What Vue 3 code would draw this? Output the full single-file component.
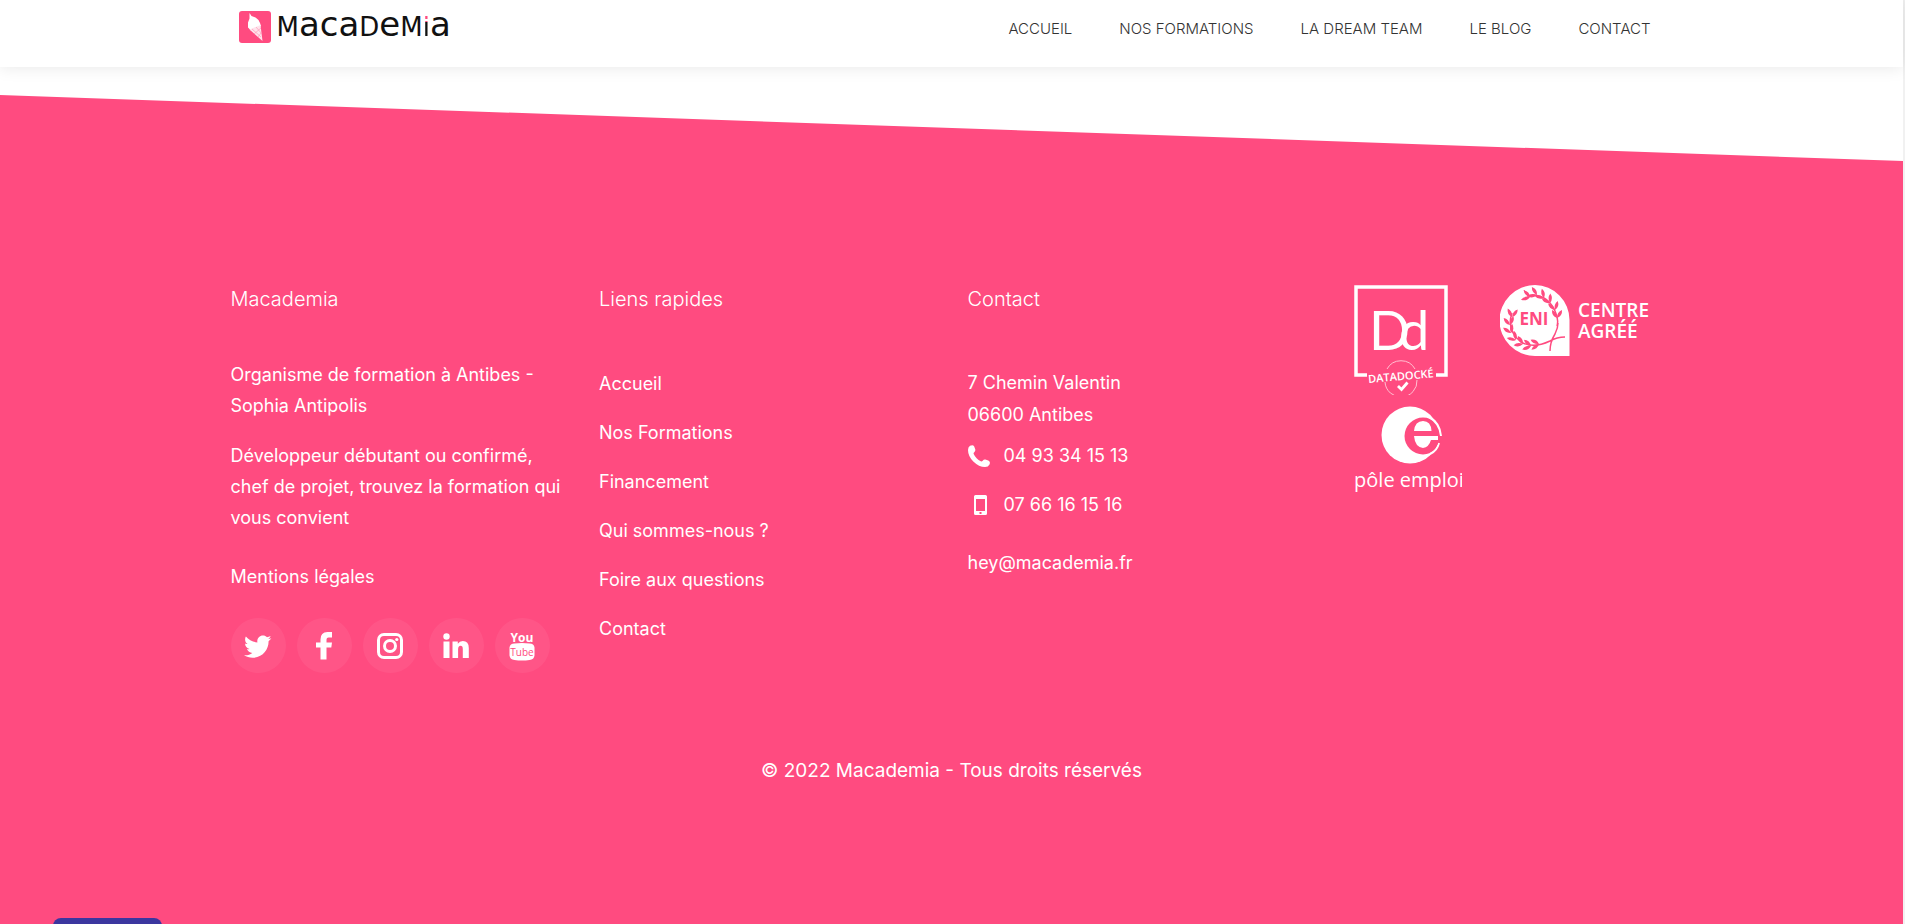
<script setup>
const nav = ['Accueil', 'Nos formations', 'La dream team', 'Le blog', 'Contact']
const links = ['Accueil', 'Nos Formations', 'Financement', 'Qui sommes-nous ?', 'Foire aux questions', 'Contact']

const wreath = [
  [30, 12, 195], [37, 10, 205], [44, 13, 225], [50, 18, 240], [55, 25, 255], [57, 33, 270],
  [12, 32, 275], [10, 40, 260], [11, 48, 245], [16, 55, 225], [23, 59, 205], [31, 61, 190], [39, 59, 175]
]
</script>

<template>
  <div class="page">
    <header class="topbar">
      <div class="container topbar-inner">
        <a href="#" class="brand">
          <svg class="brand-mark" viewBox="0 0 32 32" aria-hidden="true">
            <rect width="32" height="32" rx="3" fill="#ff4b80" />
            <path d="M10.500 2l2 3 4 1.500 3 2.500 1.500 3 1 3-5 3-5 1.500-3-3v-5l1.500-4z" fill="#fff" />
            <path d="M10.500 18.500l11-4.500 2 16z" fill="#ffe3ec" />
            <path d="M13 18l9 8M17 16l6 7M22 17l-7 6M22 22l-3 4" stroke="#ff8fb0" stroke-width=".6" />
          </svg>
          <span class="wordmark">M<b>aca</b>D<b>e</b>M<i>i</i><b>a</b></span>
        </a>
        <nav class="menu">
          <a v-for="item in nav" :key="item" href="#">{{ item }}</a>
        </nav>
      </div>
    </header>

    <footer class="footer">
      <div class="container columns">
        <section class="about">
          <h2>Macademia</h2>
          <p>Organisme de formation à Antibes - Sophia Antipolis</p>
          <p>Développeur débutant ou confirmé, chef de projet, trouvez la formation qui vous convient</p>
          <a href="#" class="legal">Mentions légales</a>
          <div class="social">
            <a href="#" aria-label="Twitter">
              <svg viewBox="0 0 28 28"><path transform="translate(0 1) scale(1.140)" d="M23.954 4.569c-.885.389-1.830.654-2.825.775 1.014-.611 1.794-1.574 2.163-2.723-.951.555-2.005.959-3.127 1.184-.896-.959-2.173-1.559-3.591-1.559-2.717 0-4.920 2.203-4.920 4.917 0 .390.045.765.127 1.124C7.691 8.094 4.066 6.130 1.640 3.161c-.427.722-.666 1.561-.666 2.475 0 1.710.870 3.213 2.188 4.096-.807-.026-1.566-.248-2.228-.616v.061c0 2.385 1.693 4.374 3.946 4.827-.413.111-.849.171-1.296.171-.314 0-.615-.030-.916-.086.631 1.953 2.445 3.377 4.604 3.417-1.680 1.319-3.809 2.105-6.102 2.105-.390 0-.779-.023-1.170-.067 2.189 1.394 4.768 2.209 7.557 2.209 9.054 0 13.999-7.496 13.999-13.986 0-.209 0-.420-.015-.630.961-.689 1.800-1.560 2.460-2.548z" /></svg>
            </a>
            <a href="#" aria-label="Facebook">
              <svg viewBox="0 0 28 28"><path d="M22 0V5.500h-3.500q-2 0-2 2v3H22l-.7 5h-4.800V27.500H10.500V15.500H6v-5h4.500V7.500q0-7.500 7-7.500z" /></svg>
            </a>
            <a href="#" aria-label="Instagram">
              <svg viewBox="0 0 28 28" class="outline"><rect x="2.500" y="2.500" width="23" height="23" rx="5.500" /><circle cx="14" cy="14" r="5.500" /><circle cx="20.800" cy="7.500" r="1.600" class="dot" /></svg>
            </a>
            <a href="#" aria-label="LinkedIn">
              <svg viewBox="0 0 28 28"><circle cx="4.500" cy="4.500" r="3.200" /><path d="M1.500 9.500h6V26h-6zM10.500 9.500h5.300v2.200q1.800-2.700 5-2.700 6 0 6 7v10h-6v-9q0-3.300-2.200-3.300-2.500 0-2.500 3.500V26h-5.600z" /></svg>
            </a>
            <a href="#" aria-label="YouTube">
              <svg viewBox="0 0 28 30"><path d="M6.500 12.500Q14 11.500 21.500 12.500q4.500 0 5 4v8q-.5 4-5 4.500-7.500 1-15 0Q2 28.500 1.500 24.500v-8q.5-4 5-4z" /><g class="yt"><text x="14" y="10.500" class="you">You</text><text x="14" y="24.500" class="tube">Tube</text></g></svg>
            </a>
          </div>
        </section>

        <section>
          <h2>Liens rapides</h2>
          <ul class="links">
            <li v-for="item in links" :key="item"><a href="#">{{ item }}</a></li>
          </ul>
        </section>

        <section>
          <h2>Contact</h2>
          <address class="contact">
            <p>7 Chemin Valentin<br />06600 Antibes</p>
            <a href="#" class="tel">
              <svg viewBox="0 0 22 22"><path d="M2 .8Q5-.8 6.200 1.500L7.300 4.500Q7.600 6 6.300 7.200 5.300 8 5.700 9 8 14 12.800 16.300 13.800 16.800 14.700 15.700 15.800 14.200 17.300 14.500L20.300 15.500Q22.800 16.700 21.500 19.500 20.300 22 17 22 11 22 5.300 16.500 0 11 0 5 0 2.200 2 .8z" /></svg>
              04 93 34 15 13
            </a>
            <a href="#" class="tel">
              <svg viewBox="0 0 22 22"><path fill-rule="evenodd" d="M7.500 1h10Q19 1 19 2.500v17q0 1.500-1.500 1.500h-10Q6 21 6 19.500v-17Q6 1 7.500 1zM8 5v12h9V5zM11.500 18v2h2v-2z" /></svg>
              07 66 16 15 16
            </a>
            <a href="#" class="mail">hey@macademia.fr</a>
          </address>
        </section>

        <section class="labels">
          <svg class="datadock" viewBox="0 0 94 110" role="img" aria-label="Datadocké">
            <path d="M13 90H2V2h90v88H82" fill="none" stroke="#fff" stroke-width="3.500" />
            <text x="15" y="65" class="dd">D</text>
            <text x="45" y="65" class="dd">d</text>
            <path d="M33 84a16 16 0 0 1 28 0M31 97a16 16 0 0 0 32-2" fill="none" stroke="#ffc0d2" stroke-width="1" />
            <text x="47" y="95" class="dock" transform="rotate(-5 48 92)">DATADOCKÉ</text>
            <path d="M44 101l3.500 3.500 6-7" fill="none" stroke="#fff" stroke-width="2.800" />
          </svg>
          <svg class="eni" viewBox="0 0 150 72" role="img" aria-label="ENI centre agréé">
            <path d="M35 0a35 35 0 0 1 34.500 35v36H35A35.500 35.500 0 0 1 35 0z" fill="#fff" />
            <g fill="none" stroke="#ff4b80" stroke-width="1.500">
              <path d="M27 11q19-4 28 15 4 8 2 15M12 28q-6 17 9 29 12 7 29-1 7-4 15-4M50 66q0-9 5-17 3-6 3-11" />
            </g>
            <g fill="#ff4b80">
              <g v-for="([x, y, r], i) in wreath" :key="i" :transform="`translate(${x} ${y}) rotate(${r})`">
                <path d="M0 0Q2-5.500 8-5 6 0 0 0zM0 0Q2 5.500 8 5 6 0 0 0z" />
              </g>
            </g>
            <text x="34" y="40" class="eni-name">ENI</text>
            <text x="78" y="32" class="eni-side">CENTRE</text>
            <text x="78" y="53" class="eni-side">AGRÉÉ</text>
          </svg>
          <svg class="pole" viewBox="0 0 108 90" role="img" aria-label="Pôle emploi">
            <circle cx="56" cy="30" r="28.500" fill="#fff" />
            <circle cx="69" cy="31" r="18.500" fill="#ff4b80" />
            <path d="M75 12q11 6 12 19M85 38q-2 8-9 11" fill="none" stroke="#fff" stroke-width="2" />
            <path d="M60 26q1-10 9-10 8 0 8.500 10zM60 31h24v4h-7q-2 7-8 8-8-1-9-12z" fill="#fff" />
            <path d="M77 36h8q-2 6-6 9l-3-4z" fill="#ff4b80" />
            <text x="55" y="82" class="pole-name">pôle emploi</text>
          </svg>
        </section>
      </div>
      <p class="copyright">© 2022 Macademia - Tous droits réservés</p>
    </footer>
    <button type="button" class="widget" aria-label="Aide"></button>
  </div>
</template>

<style>
body {
  background: #fff;
}
</style>

<style scoped>
.page {
  box-sizing: border-box;
  min-height: 100vh;
  display: flex;
  flex-direction: column;
  border-right: 2px solid #f1f1f1;
  font-family: Inter, "Liberation Sans", sans-serif;
  font-size: 18px;
  line-height: 32px;
  color: #fff;
}
a {
  color: inherit;
  text-decoration: none;
}
.container {
  box-sizing: border-box;
  width: 100%;
  max-width: 1474px;
  margin: 0 auto;
}
.topbar {
  height: 67px;
  box-shadow: 0 0 16px rgba(0, 0, 0, 0.1);
}
.topbar-inner {
  display: flex;
  justify-content: space-between;
  align-items: flex-start;
  padding: 11px 38px 0 24px;
}
.brand {
  display: flex;
  gap: 6px;
  height: 32px;
}
.brand-mark {
  width: 32px;
  height: 32px;
}
.wordmark {
  font-family: "DejaVu Sans", sans-serif;
  font-size: 26px;
  line-height: 32px;
  color: #111;
}
.wordmark b {
  font-size: 34px;
  font-weight: 400;
  line-height: 24px;
}
.wordmark i {
  font-style: normal;
  background: linear-gradient(#ff4b80 10px, #111 10px);
  background-clip: text;
  color: transparent;
}
.menu {
  display: flex;
  gap: 47px;
  font-size: 15px;
  font-weight: 300;
  line-height: 36px;
  text-transform: uppercase;
  color: #333;
}
.footer {
  flex: 1;
  margin-top: 28px;
  padding-top: 188px;
  background: #ff4b80;
  clip-path: polygon(0 0, 100% 66px, 100% 100%, 0 100%);
}
.columns {
  display: grid;
  grid-template-columns: repeat(4, 1fr);
}
.columns section {
  padding: 0 16px;
}
h2 {
  margin: 0 0 44px;
  font-size: 20px;
  font-weight: 300;
  line-height: 32px;
}
p {
  margin: 0 0 19px;
}
.about p {
  line-height: 31px;
}
.legal {
  display: block;
  margin-top: 28px;
}
.social {
  display: flex;
  gap: 11px;
  margin-top: 25px;
}
.social a {
  display: grid;
  place-items: center;
  width: 55px;
  height: 55px;
  border-radius: 50%;
  background: rgba(255, 255, 255, 0.06);
}
.social svg {
  width: 28px;
  height: 30px;
  fill: #fff;
}
.social .outline {
  fill: none;
  stroke: #fff;
  stroke-width: 3;
}
.social .dot {
  fill: #fff;
  stroke: none;
}
.yt {
  font-family: "Open Sans", sans-serif;
  text-anchor: middle;
}
.you {
  font-size: 12px;
  font-weight: 700;
}
.tube {
  font-size: 10px;
  fill: #ff4b80;
}
.links {
  display: grid;
  row-gap: 17px;
  margin: 0;
  padding: 9px 0 0;
  list-style: none;
}
.contact {
  padding-top: 8px;
  font-style: normal;
}
.contact p {
  margin-bottom: 9px;
}
.tel {
  display: flex;
  align-items: center;
  gap: 14px;
  margin-bottom: 17px;
}
.tel svg {
  width: 22px;
  height: 22px;
  fill: #fff;
}
.mail {
  display: block;
  margin-top: 26px;
}
.columns .labels {
  display: grid;
  grid-template-columns: 146px 150px;
  grid-template-rows: 120px 90px;
  align-content: start;
  padding: 2px 0 0 34px;
}
.datadock {
  width: 94px;
  height: 110px;
}
.eni {
  width: 150px;
  height: 72px;
}
.pole {
  width: 108px;
  height: 90px;
}
.labels text {
  fill: #fff;
  font-family: "Open Sans", sans-serif;
}
.labels .dd {
  font-family: Lato, sans-serif;
  font-size: 54px;
}
.labels .dock {
  font-size: 11px;
  font-weight: 600;
  text-anchor: middle;
}
.labels .eni-name {
  fill: #ff4b80;
  font-size: 17px;
  font-weight: 700;
  text-anchor: middle;
}
.labels .eni-side {
  font-size: 19px;
  font-weight: 600;
}
.labels .pole-name {
  font-size: 20px;
  text-anchor: middle;
}
.copyright {
  margin: 82px 0 0;
  font-size: 19px;
  text-align: center;
}
.widget {
  position: fixed;
  left: 53px;
  bottom: -34px;
  width: 109px;
  height: 40px;
  border: 0;
  border-radius: 8px;
  background: #3b369f;
}
</style>
